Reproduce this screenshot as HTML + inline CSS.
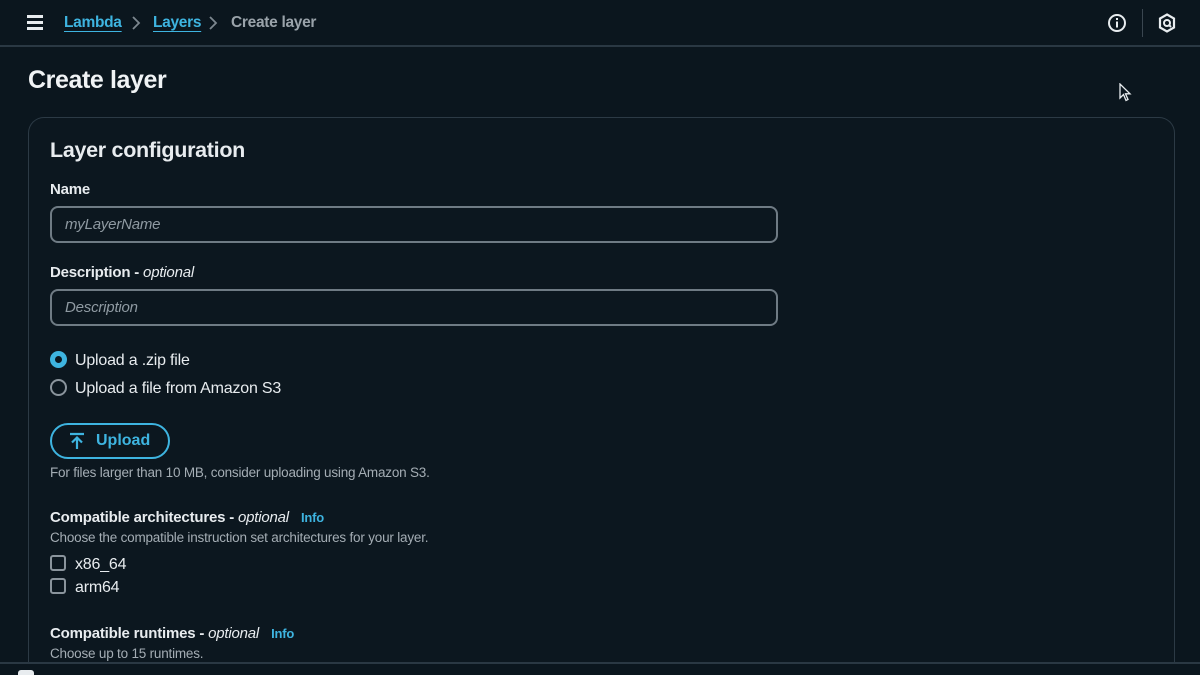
<!DOCTYPE html>
<html><head><meta charset="utf-8"><style>
*{box-sizing:border-box;margin:0;padding:0}
html,body{width:1200px;height:675px;overflow:hidden;background:#0b161e;font-family:"Liberation Sans",sans-serif;color:#e8ecef;position:relative}
.abs{position:absolute}
.top{position:absolute;left:0;top:0;width:1200px;height:47px;border-bottom:2px solid #2a3843;background:#0b161e}
.bc{position:absolute;top:14px;font-size:15px;font-weight:bold;letter-spacing:-0.3px}
.link{color:#3eb4e0;text-decoration:underline;text-underline-offset:4px}
h1{position:absolute;left:28px;top:66px;font-size:25px;font-weight:bold;letter-spacing:-0.4px;color:#f0f3f5}
.panel{position:absolute;left:28px;top:117px;width:1147px;height:545px;border:1.5px solid #2c3a45;border-bottom:none;border-radius:16px 16px 0 0;background:#0c171f}
.lbl{position:absolute;left:50px;font-size:15px;font-weight:bold;letter-spacing:-0.2px;color:#e8ecef}
.lbl i{font-weight:normal}
.inp{position:absolute;left:50px;width:728px;height:37px;border:2px solid #6f7b84;border-radius:8px;padding-left:13px;line-height:33px;font-style:italic;font-size:15px;color:#8f9aa2;letter-spacing:-0.2px}
.opt{position:absolute;left:50px;font-size:16px;color:#e8ecef;letter-spacing:-0.2px}
.small{position:absolute;left:50px;font-size:13.5px;color:#a4adb4;letter-spacing:-0.2px}
.info{color:#3eb4e0;font-weight:bold;font-size:13px;margin-left:12px;font-style:normal}
.cb{display:inline-block;width:16px;height:16px;border:2px solid #8a949c;border-radius:3px;vertical-align:-2px;margin-right:9px}
</style></head><body>
<div class="top">
 <div class="abs" style="left:27px;top:15px;width:16px;height:14px">
  <div style="height:2.5px;background:#e8ecef;margin-bottom:3.5px"></div>
  <div style="height:2.5px;background:#e8ecef;margin-bottom:3.5px"></div>
  <div style="height:2.5px;background:#e8ecef"></div>
 </div>
 <div class="bc" style="left:64px;font-size:15.5px"><span class="link">Lambda</span></div>
 <svg class="abs" style="left:131px;top:16px" width="10" height="14" viewBox="0 0 10 14"><path d="M2 1 L8 7 L2 13" fill="none" stroke="#7d878f" stroke-width="1.8"/></svg>
 <div class="bc" style="left:153px;font-size:15.5px"><span class="link">Layers</span></div>
 <svg class="abs" style="left:208px;top:16px" width="10" height="14" viewBox="0 0 10 14"><path d="M2 1 L8 7 L2 13" fill="none" stroke="#7d878f" stroke-width="1.8"/></svg>
 <div class="bc" style="left:231px;color:#9aa3aa;font-size:15.5px">Create layer</div>
 <svg class="abs" style="left:1107px;top:13px" width="20" height="20" viewBox="0 0 20 20"><circle cx="10" cy="10" r="8" fill="none" stroke="#e8ecef" stroke-width="2"/><rect x="9" y="8.5" width="2" height="6" fill="#e8ecef"/><rect x="9" y="5" width="2" height="2" fill="#e8ecef"/></svg>
 <div class="abs" style="left:1142px;top:9px;width:1px;height:28px;background:#3a4650"></div>
 <svg class="abs" style="left:1158px;top:13px" width="18" height="20" viewBox="0 0 18 20"><path d="M9 1.5 L16 5.5 L16 14.5 L9 18.5 L2 14.5 L2 5.5 Z" fill="none" stroke="#e8ecef" stroke-width="2.2"/><circle cx="9" cy="10" r="3" fill="none" stroke="#e8ecef" stroke-width="2"/><path d="M10.5 11.5 L13 14" stroke="#e8ecef" stroke-width="2"/></svg>
</div>
<svg class="abs" style="left:1119px;top:83px" width="14" height="20" viewBox="0 0 14 20"><path d="M1 1 L1 15 L4.5 11.5 L7 17.5 L9 16.5 L6.5 10.8 L11 10.8 Z" fill="#0b161e" stroke="#e8ecef" stroke-width="1.3"/></svg>
<h1>Create layer</h1>
<div class="panel"></div>
<div class="lbl" style="top:138px;font-size:21.5px;letter-spacing:-0.3px">Layer configuration</div>
<div class="lbl" style="top:181px">Name</div>
<div class="inp" style="top:206px">myLayerName</div>
<div class="lbl" style="top:264px">Description - <i>optional</i></div>
<div class="inp" style="top:289px">Description</div>
<div class="opt" style="top:351px"><span style="display:inline-block;width:17px;height:17px;border-radius:50%;border:5px solid #3eb4e0;background:#0b161e;vertical-align:-3px;margin-right:8px"></span>Upload a .zip file</div>
<div class="opt" style="top:379px"><span style="display:inline-block;width:17px;height:17px;border-radius:50%;border:2px solid #8a949c;vertical-align:-3px;margin-right:8px"></span>Upload a file from Amazon S3</div>
<div class="abs" style="left:50px;top:423px;width:120px;height:36px;border:2px solid #3eb4e0;border-radius:18px;color:#3eb4e0;font-weight:bold;font-size:16px;line-height:32px;padding-left:44px">Upload</div>
<svg class="abs" style="left:69px;top:432px" width="16" height="18" viewBox="0 0 16 18"><path d="M1 2 H15 M8 17 V6 M3 10.5 L8 5.5 L13 10.5" fill="none" stroke="#3eb4e0" stroke-width="2.2"/></svg>
<div class="small" style="top:465px">For files larger than 10 MB, consider uploading using Amazon S3.</div>
<div class="lbl" style="top:509px">Compatible architectures - <i>optional</i><span class="info">Info</span></div>
<div class="small" style="top:530px">Choose the compatible instruction set architectures for your layer.</div>
<div class="opt" style="top:555px"><span class="cb"></span>x86_64</div>
<div class="opt" style="top:578px"><span class="cb"></span>arm64</div>
<div class="lbl" style="top:625px">Compatible runtimes - <i>optional</i><span class="info">Info</span></div>
<div class="small" style="top:646px">Choose up to 15 runtimes.</div>
<div class="abs" style="left:0;top:662px;width:1200px;height:13px;background:#0b161e;border-top:2px solid #2a3843"></div>
<div class="abs" style="left:18px;top:670px;width:16px;height:8px;border-radius:3px;background:#e8ecef"></div>
</body></html>
